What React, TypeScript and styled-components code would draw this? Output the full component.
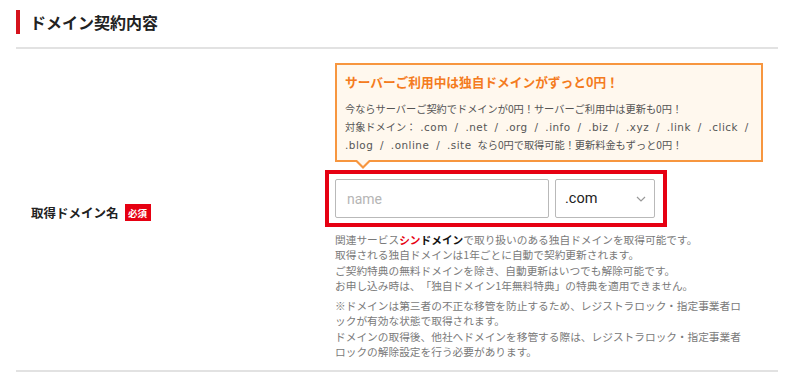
import React from "react";
import styled, { createGlobalStyle } from "styled-components";

const GlobalStyle = createGlobalStyle`
  html, body {
    margin: 0;
    padding: 0;
    background: #ffffff;
  }
  body {
    font-family: "Noto Sans CJK JP", "Noto Sans", "Liberation Sans", sans-serif;
    color: #333333;
    text-spacing-trim: space-all;
  }
`;

const Page = styled.div`
  width: 800px;
  height: 381px;
  padding: 10px 22px 0 16px;
  box-sizing: border-box;
  overflow: hidden;
`;

const SectionTitle = styled.h2`
  margin: 0;
  height: 24px;
  border-left: 4px solid #d5121c;
  padding-left: 10px;
  display: flex;
  align-items: center;
  font-size: 16px;
  font-weight: 700;
  color: #222222;
  line-height: 1;
`;

const Divider = styled.hr`
  margin: 0;
  border: none;
  height: 2px;
  background: #e2e2e2;
`;

const TitleDivider = styled(Divider)`
  margin-top: 13px;
`;

const FormRow = styled.div`
  display: grid;
  grid-template-columns: 319px 1fr;
  align-items: center;
  padding: 14px 0 11px;
`;

const Label = styled.div`
  display: flex;
  align-items: center;
  gap: 6px;
  padding-left: 15px;
  padding-top: 3px;
  font-size: 12.5px;
  font-weight: 700;
  color: #222222;
`;

const RequiredBadge = styled.span`
  display: inline-flex;
  align-items: center;
  justify-content: center;
  width: 26px;
  height: 17px;
  background: #e60012;
  color: #ffffff;
  font-size: 9.5px;
  font-weight: 700;
`;

const Field = styled.div`
  display: flex;
  flex-direction: column;
  align-items: flex-start;
`;

const Callout = styled.div`
  position: relative;
  width: 428px;
  box-sizing: border-box;
  border: 2px solid #f7963f;
  background: #fff8ee;
  padding: 7px 8px 6px 8px;

  &::before,
  &::after {
    content: "";
    position: absolute;
    left: 17px;
    width: 0;
    height: 0;
    border-style: solid;
  }
  &::before {
    bottom: -9px;
    border-width: 9px 9px 0 9px;
    border-color: #f7963f transparent transparent transparent;
  }
  &::after {
    bottom: -6px;
    left: 19px;
    border-width: 7px 7px 0 7px;
    border-color: #fff8ee transparent transparent transparent;
  }
`;

const CalloutTitle = styled.div`
  font-size: 12.7px;
  font-weight: 700;
  color: #f47b20;
  line-height: 20px;
  margin-bottom: 8px;
`;

const CalloutText = styled.p`
  margin: 0;
  font-size: 10.2px;
  line-height: 18px;
  color: #555555;
  white-space: nowrap;
`;

const DomainList = styled.span<{ $lead?: boolean }>`
  font-family: "DejaVu Sans", sans-serif;
  font-size: 10.4px;
  letter-spacing: 0.5px;
  word-spacing: 3px;
  padding-left: ${(p) => (p.$lead ? "0" : "4px")};
  padding-right: ${(p) => (p.$lead ? "6px" : "0")};
`;

const Highlight = styled.div`
  margin-top: 8px;
  margin-left: -10px;
  border: 4px solid #e60012;
  padding: 5px 8px 5px 6px;
  display: flex;
  gap: 6px;
`;

const NameInput = styled.input`
  width: 214px;
  height: 39px;
  box-sizing: border-box;
  border: 1px solid #b9b9b9;
  border-radius: 2px;
  padding: 0 11px;
  font-family: "Roboto", "Liberation Sans", sans-serif;
  font-size: 14px;
  color: #333333;
  outline: none;
  &::placeholder {
    color: #b5b5b5;
  }
`;

const TldSelect = styled.div`
  width: 100px;
  height: 39px;
  box-sizing: border-box;
  border: 1px solid #b9b9b9;
  border-radius: 2px;
  display: flex;
  align-items: center;
  justify-content: space-between;
  padding: 0 8px 0 9px;
  font-family: "Roboto", "Liberation Sans", sans-serif;
  font-size: 14.5px;
  color: #222222;
`;

const Notes = styled.div`
  margin-top: 5px;
  display: flex;
  flex-direction: column;
  gap: 5px;
`;

const NoteText = styled.p`
  margin: 0;
  font-size: 10.7px;
  line-height: 15.3px;
  color: #7a7a7a;
  white-space: nowrap;
`;

const Brand = styled.span<{ $red?: boolean }>`
  font-weight: 700;
  color: ${(p) => (p.$red ? "#e60012" : "#111111")};
`;

function Chevron() {
  return (
    <svg width="10" height="6" viewBox="0 0 10 6" fill="none">
      <path d="M1 1l4 4 4-4" stroke="#999999" strokeWidth="1.2" />
    </svg>
  );
}

export default function App() {
  return (
    <>
      <GlobalStyle />
      <Page>
        <SectionTitle>ドメイン契約内容</SectionTitle>
        <TitleDivider />
        <FormRow>
          <Label>
            取得ドメイン名
            <RequiredBadge>必須</RequiredBadge>
          </Label>
          <Field>
            <Callout>
              <CalloutTitle>サーバーご利用中は独自ドメインがずっと0円！</CalloutTitle>
              <CalloutText>
                今ならサーバーご契約でドメインが0円！サーバーご利用中は更新も0円！
                <br />
                対象ドメイン：
                <DomainList>.com / .net / .org / .info / .biz / .xyz / .link / .click /</DomainList>
                <br />
                <DomainList $lead>.blog / .online / .site</DomainList>
                なら0円で取得可能！更新料金もずっと0円！
              </CalloutText>
            </Callout>
            <Highlight>
              <NameInput placeholder="name" />
              <TldSelect>
                .com
                <Chevron />
              </TldSelect>
            </Highlight>
            <Notes>
              <NoteText>
                関連サービス<Brand $red>シン</Brand>
                <Brand>ドメイン</Brand>で取り扱いのある独自ドメインを取得可能です。
                <br />
                取得される独自ドメインは1年ごとに自動で契約更新されます。
                <br />
                ご契約特典の無料ドメインを除き、自動更新はいつでも解除可能です。
                <br />
                お申し込み時は、「独自ドメイン1年無料特典」の特典を適用できません。
              </NoteText>
              <NoteText>
                ※ドメインは第三者の不正な移管を防止するため、レジストラロック・指定事業者ロ
                <br />
                ックが有効な状態で取得されます。
                <br />
                ドメインの取得後、他社へドメインを移管する際は、レジストラロック・指定事業者
                <br />
                ロックの解除設定を行う必要があります。
              </NoteText>
            </Notes>
          </Field>
        </FormRow>
        <Divider />
      </Page>
    </>
  );
}
